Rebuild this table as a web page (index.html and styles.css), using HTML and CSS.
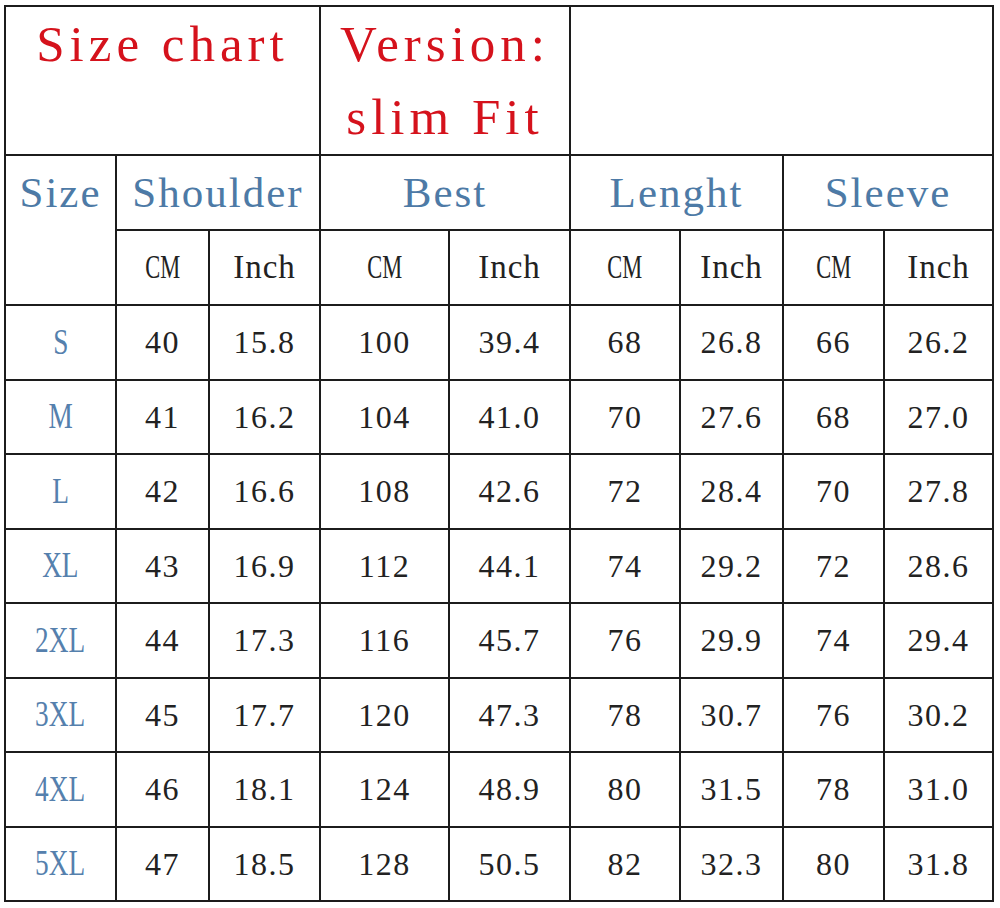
FILE: index.html
```html
<!DOCTYPE html>
<html lang="en">
<head>
<meta charset="utf-8">
<title>Size chart</title>
<link rel="stylesheet" href="styles.css">
</head>
<body>
<table class="chart">
  <colgroup>
    <col class="c-size">
    <col class="c-sh-cm">
    <col class="c-sh-in">
    <col class="c-be-cm">
    <col class="c-be-in">
    <col class="c-le-cm">
    <col class="c-le-in">
    <col class="c-sl-cm">
    <col class="c-sl-in">
  </colgroup>
  <tr class="r-title">
    <td class="title" colspan="3">Size chart</td>
    <td class="title" colspan="2">Version:<br>slim Fit</td>
    <td colspan="4"></td>
  </tr>
  <tr class="r-head">
    <td class="head head-size" rowspan="2">Size</td>
    <td class="head" colspan="2">Shoulder</td>
    <td class="head" colspan="2">Best</td>
    <td class="head" colspan="2">Lenght</td>
    <td class="head" colspan="2">Sleeve</td>
  </tr>
  <tr class="r-head">
    <td class="unit"><span class="cm">CM</span></td>
    <td class="unit">Inch</td>
    <td class="unit"><span class="cm">CM</span></td>
    <td class="unit">Inch</td>
    <td class="unit"><span class="cm">CM</span></td>
    <td class="unit">Inch</td>
    <td class="unit"><span class="cm">CM</span></td>
    <td class="unit">Inch</td>
  </tr>
  <tr class="r-data">
    <td class="sz"><span>S</span></td>
    <td>40</td><td>15.8</td><td>100</td><td>39.4</td><td>68</td><td>26.8</td><td>66</td><td>26.2</td>
  </tr>
  <tr class="r-data">
    <td class="sz"><span>M</span></td>
    <td>41</td><td>16.2</td><td>104</td><td>41.0</td><td>70</td><td>27.6</td><td>68</td><td>27.0</td>
  </tr>
  <tr class="r-data">
    <td class="sz"><span>L</span></td>
    <td>42</td><td>16.6</td><td>108</td><td>42.6</td><td>72</td><td>28.4</td><td>70</td><td>27.8</td>
  </tr>
  <tr class="r-data">
    <td class="sz"><span>XL</span></td>
    <td>43</td><td>16.9</td><td>112</td><td>44.1</td><td>74</td><td>29.2</td><td>72</td><td>28.6</td>
  </tr>
  <tr class="r-data">
    <td class="sz"><span>2XL</span></td>
    <td>44</td><td>17.3</td><td>116</td><td>45.7</td><td>76</td><td>29.9</td><td>74</td><td>29.4</td>
  </tr>
  <tr class="r-data">
    <td class="sz"><span>3XL</span></td>
    <td>45</td><td>17.7</td><td>120</td><td>47.3</td><td>78</td><td>30.7</td><td>76</td><td>30.2</td>
  </tr>
  <tr class="r-data">
    <td class="sz"><span>4XL</span></td>
    <td>46</td><td>18.1</td><td>124</td><td>48.9</td><td>80</td><td>31.5</td><td>78</td><td>31.0</td>
  </tr>
  <tr class="r-data">
    <td class="sz"><span>5XL</span></td>
    <td>47</td><td>18.5</td><td>128</td><td>50.5</td><td>82</td><td>32.3</td><td>80</td><td>31.8</td>
  </tr>
</table>
</body>
</html>
```

FILE: styles.css
```css
html, body {
  margin: 0;
  padding: 0;
  background: #ffffff;
}

body {
  font-family: "Liberation Serif", "Times New Roman", serif;
  color: #222222;
}

.chart {
  margin: 5px 0 0 4px;
  border-collapse: collapse;
  table-layout: fixed;
  width: 990px;
}

.chart td {
  border: 2px solid #1c1c1c;
  padding: 0;
  text-align: center;
  vertical-align: middle;
  font-size: 32px;
  line-height: 1;
  letter-spacing: 1.5px;
  white-space: nowrap;
  overflow: hidden;
}

.c-size  { width: 111px; }
.c-sh-cm { width: 93px; }
.c-sh-in { width: 111px; }
.c-be-cm { width: 129px; }
.c-be-in { width: 121px; }
.c-le-cm { width: 110px; }
.c-le-in { width: 103px; }
.c-sl-cm { width: 101px; }
.c-sl-in { width: 109px; }

.r-title { height: 148px; }
.r-head  { height: 75px; }
.r-data  { height: 74.5px; }

.chart td.title {
  vertical-align: top;
  padding-top: 1px;
  font-size: 51px;
  line-height: 73px;
  letter-spacing: 5px;
  color: #d5121c;
}

.chart td.head {
  font-size: 43px;
  letter-spacing: 2px;
  color: #4d7aa6;
}

.chart td.head-size {
  vertical-align: top;
  line-height: 73px;
}

.chart td.unit {
  font-size: 33px;
  letter-spacing: 1px;
  color: #222222;
}

.cm {
  display: inline-block;
  transform: scaleX(0.68);
  letter-spacing: 0;
}

.chart td.sz {
  font-size: 35px;
  letter-spacing: 0;
  color: #5580ad;
}

.sz span {
  display: inline-block;
  transform: scaleX(0.78);
}
```
